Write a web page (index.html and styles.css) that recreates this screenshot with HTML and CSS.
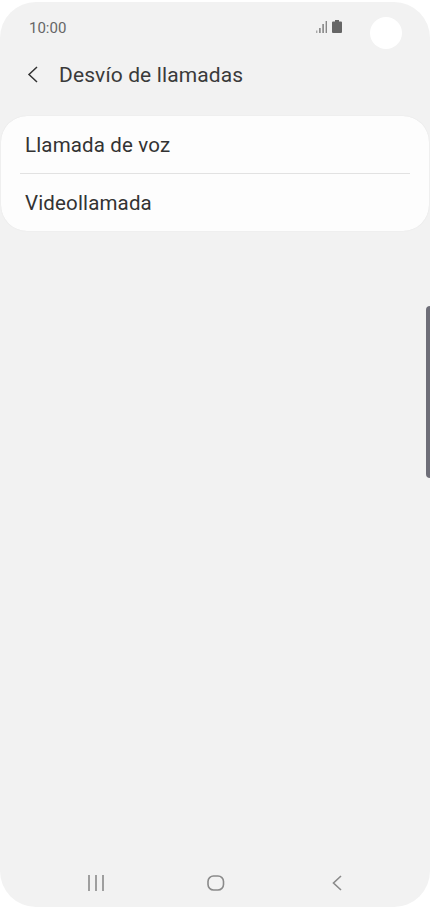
FILE: index.html
```html
<!DOCTYPE html>
<html lang="es">
  <head>
    <meta charset="utf-8">
    <title>Desvío de llamadas</title>
    <link rel="stylesheet" href="styles.css">
  </head>
  <body>
    <div class="phone">
      <div class="statusbar">
        <span class="time">10:00</span>
        <div class="statusicons">
          <svg width="12" height="13" viewBox="0 0 12 13">
            <rect x="0" y="10.5" width="1.4" height="2.5" fill="#aaa"/>
            <rect x="3.2" y="8" width="1.4" height="5" fill="#777"/>
            <rect x="6.4" y="4" width="1.4" height="9" fill="#777"/>
            <rect x="9.6" y="1" width="1.4" height="12" fill="#888"/>
          </svg>
          <svg width="10" height="13" viewBox="0 0 10 13">
            <path d="M3 0h4v1.500h2a1 1 0 0 1 1 1V12a1 1 0 0 1-1 1H1a1 1 0 0 1-1-1V2.500a1 1 0 0 1 1-1h2z" fill="#666"/>
          </svg>
        </div>
        <div class="camera"></div>
      </div>

      <div class="header">
        <svg class="backicon" width="12" height="18" viewBox="0 0 12 18">
          <path d="M10 1L2 8.500l8 7.500" fill="none" stroke="#333" stroke-width="1.5"/>
        </svg>
        <h1 class="title">Desvío de llamadas</h1>
      </div>

      <div class="card">
        <div class="row">Llamada de voz</div>
        <div class="divider"></div>
        <div class="row">Videollamada</div>
      </div>

      <div class="scrollthumb"></div>

      <div class="navbar">
        <svg width="16" height="16" viewBox="0 0 16 16">
          <path d="M1 0v16M8 0v16M15 0v16" fill="none" stroke="#8a8a8a" stroke-width="1.6"/>
        </svg>
        <svg class="homeicon" width="18" height="16" viewBox="0 0 18 16">
          <rect x="1" y="1" width="15.500" height="14" rx="5.500" fill="none" stroke="#8a8a8a" stroke-width="1.6"/>
        </svg>
        <svg width="10" height="16" viewBox="0 0 10 16">
          <path d="M9 1L1.500 8L9 15" fill="none" stroke="#8a8a8a" stroke-width="1.6"/>
        </svg>
      </div>
    </div>
  </body>
</html>
```

FILE: styles.css
```css
html,
body {
  margin: 0;
  padding: 0;
  background-color: #fff;
}

body {
  font-family: Roboto, "Noto Sans", sans-serif;
  overflow: hidden;
}

.phone {
  position: relative;
  display: flex;
  flex-direction: column;
  height: 905px;
  margin-top: 2px;
  background-color: #f2f2f2;
  border-radius: 36px;
  overflow: hidden;
}

.statusbar {
  display: flex;
  align-items: flex-start;
  height: 48px;
  padding: 0 28px 0 29px;
}
.time {
  margin-top: 17px;
  margin-right: auto;
  font-size: 15px;
  color: #666;
}
.statusicons {
  display: flex;
  gap: 4px;
  margin-top: 18px;
  margin-right: 28px;
}
.camera {
  width: 32px;
  height: 32px;
  margin-top: 15px;
  border-radius: 50%;
  background-color: #fff;
}

.header {
  display: flex;
  align-items: center;
  height: 50px;
  padding-left: 27px;
}
.backicon {
  margin-right: 20px;
}
.title {
  margin: 0;
  font-size: 21px;
  font-weight: 400;
  letter-spacing: 0.12px;
  color: #3a3a3a;
}

.card {
  display: flex;
  flex-direction: column;
  margin: 16px 1px 0;
  background-color: #fdfdfd;
  border-radius: 26px;
  box-shadow: 0 0 1px #d8d8d8;
}
.row {
  display: flex;
  align-items: center;
  height: 57px;
  padding-left: 24px;
  font-size: 20.5px;
  letter-spacing: 0.15px;
  color: #333;
}
.divider {
  height: 1px;
  margin: 0 19px;
  background-color: #e2e2e2;
}

.scrollthumb {
  position: absolute;
  right: 0;
  top: 304px;
  width: 4px;
  height: 172px;
  background-color: #6e6e78;
  border-radius: 4px 0 0 4px;
}

.navbar {
  display: flex;
  justify-content: space-between;
  align-items: center;
  height: 50px;
  margin-top: auto;
  padding: 2px 88.5px 0 88px;
  box-sizing: border-box;
}
.homeicon {
  margin-right: 4px;
}
```
